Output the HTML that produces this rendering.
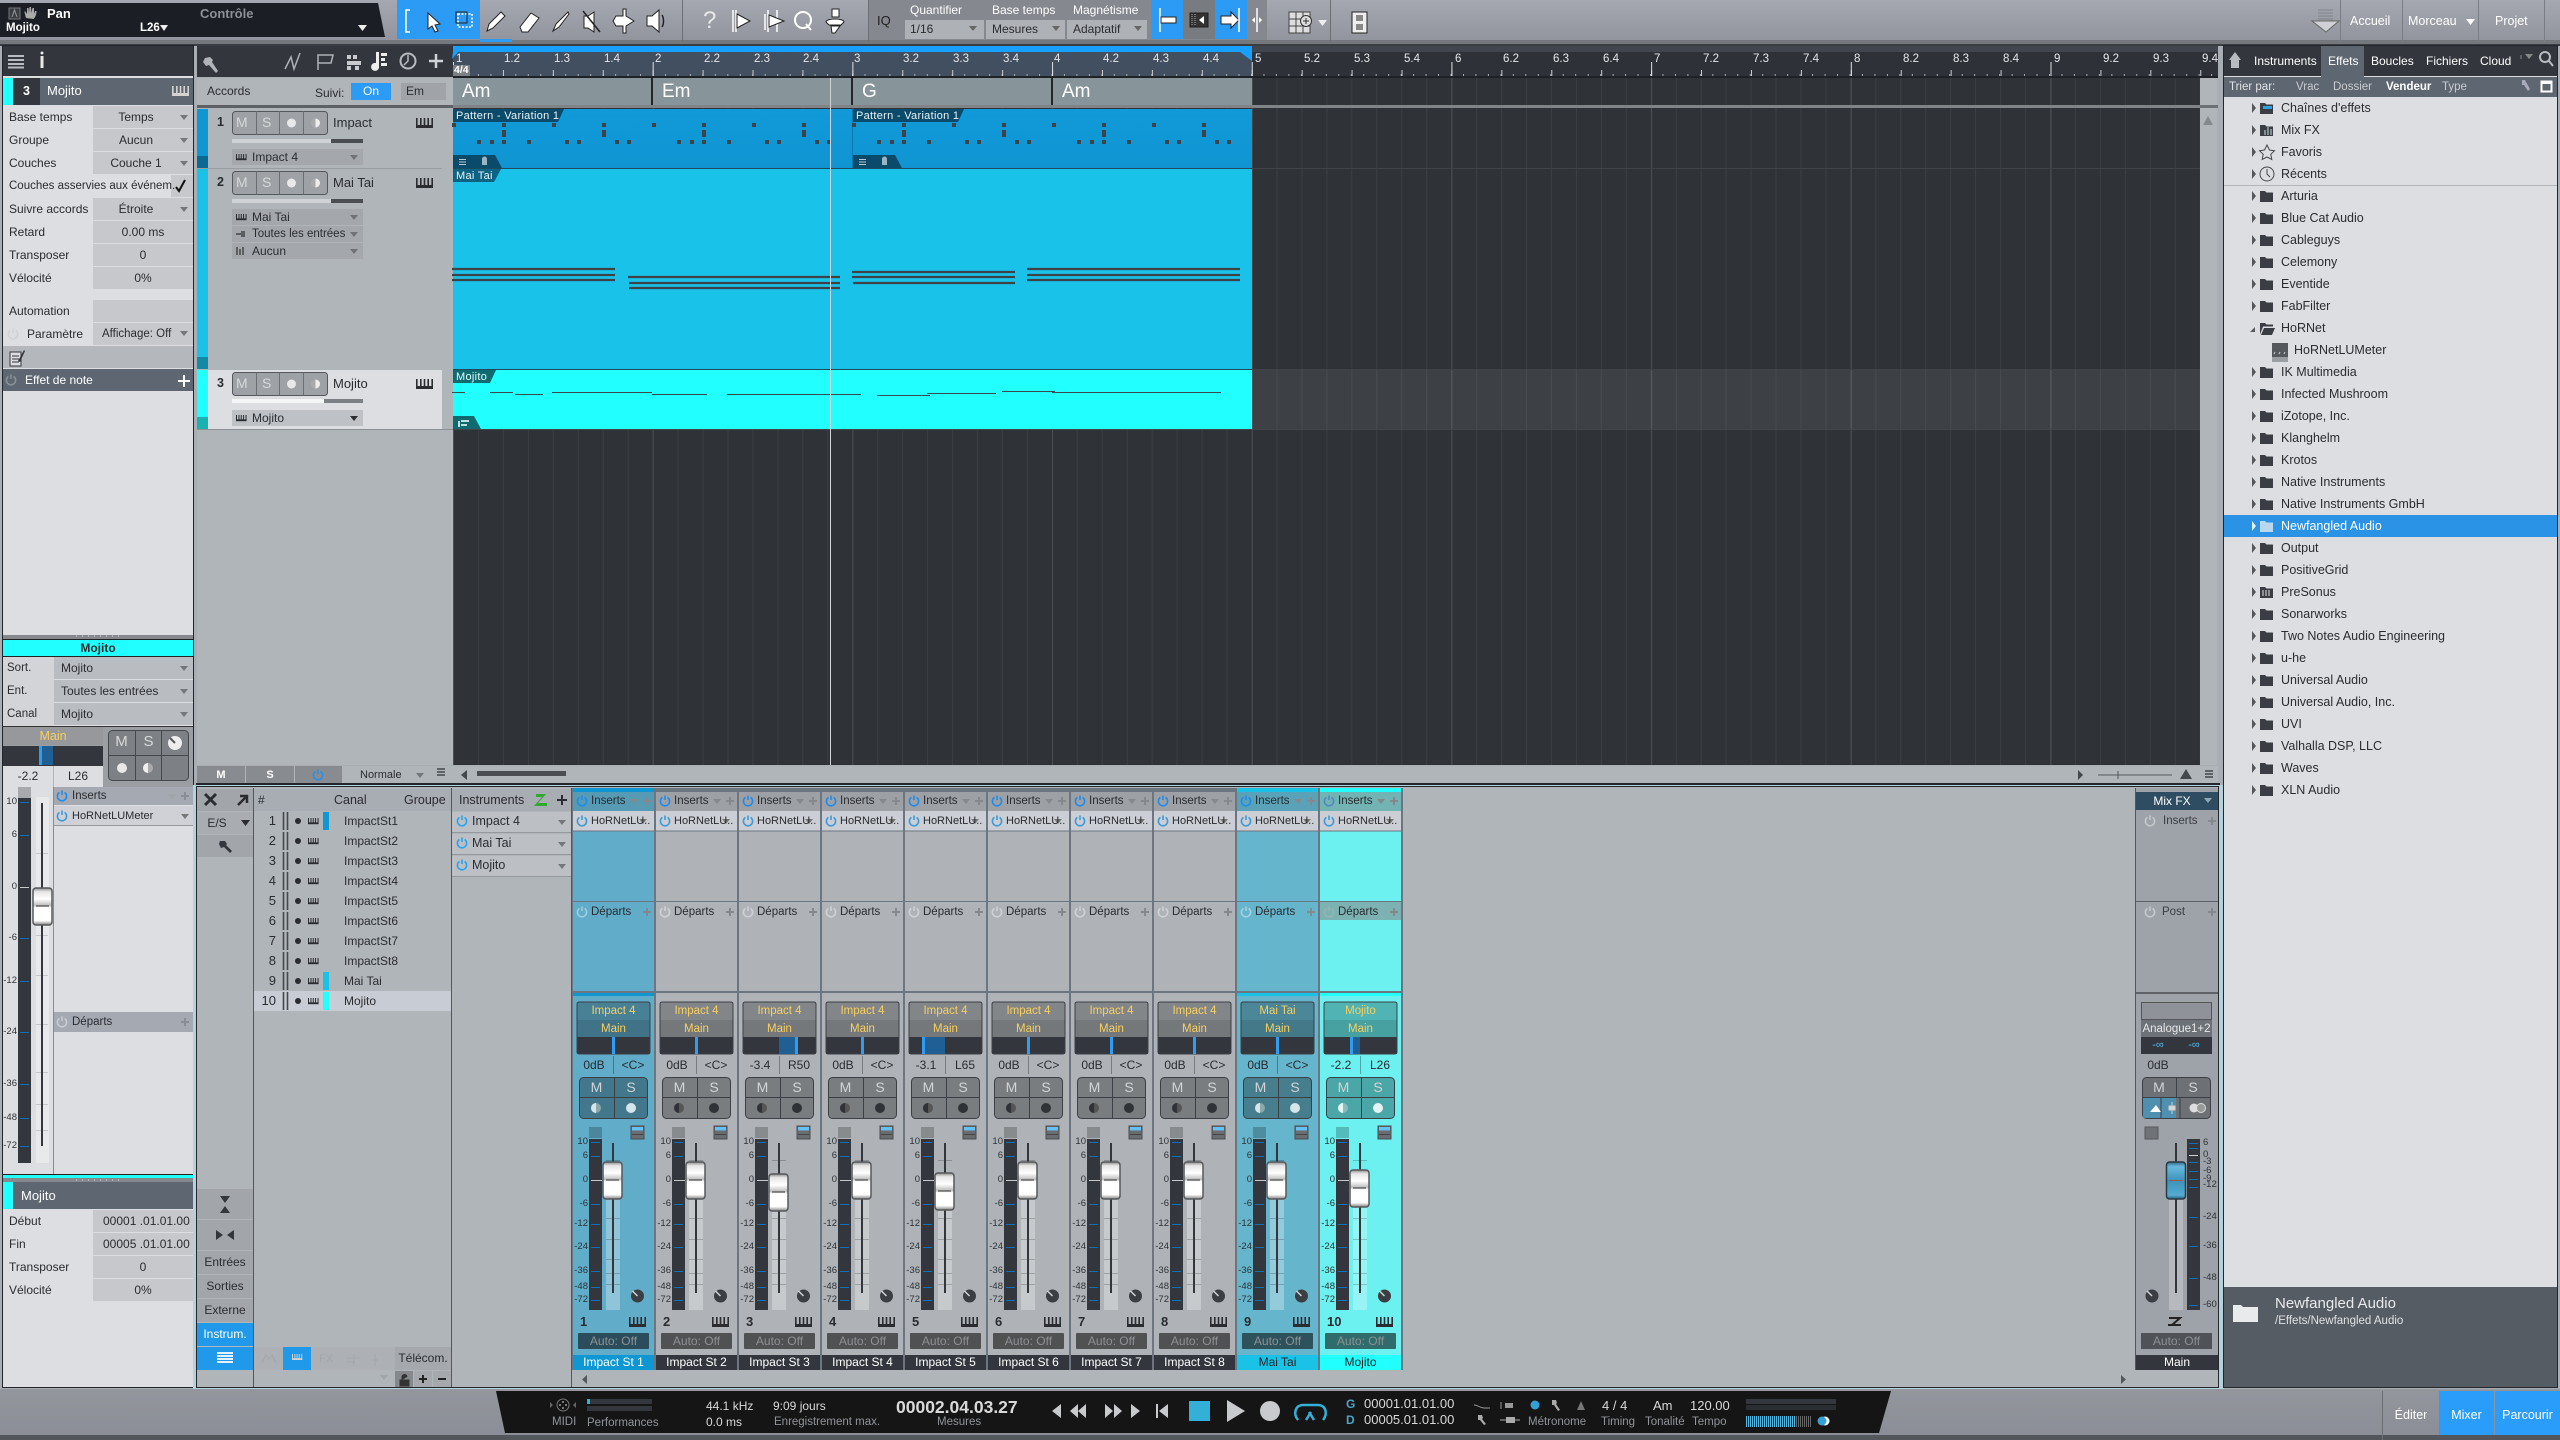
<!DOCTYPE html>
<html><head><meta charset="utf-8"><title>Studio One</title>
<style>
html,body{margin:0;width:2560px;height:1440px;overflow:hidden;background:#a9aeb4}
body{position:relative;font:12.5px "Liberation Sans",sans-serif;color:#2a2c30}
body *{position:absolute;box-sizing:border-box}
i{font-style:normal;white-space:nowrap;line-height:14px;z-index:3}
u{text-decoration:none;white-space:nowrap;line-height:14px;top:52px;font-size:11.5px;color:#e4e6e8;z-index:3}
.f{background:#c6c8cb;left:93px;width:100px;height:22px}
.ce{text-align:center}
.c{left:0;top:0;width:81px;height:1370px}
.bg{left:0;top:792px;width:81px;height:578px;background:#afb3b7}
.in,.pl,.de,.nm,.ma{font-size:11.5px}
.in{left:18px;top:794px}.pl{left:18px;top:814px;font-size:11px}.de{left:18px;top:905px}
.nm,.ma{left:4px;width:73px;text-align:center;color:#f6cf60;top:1004px}.ma{top:1022px}
.vl,.pn{left:2px;width:38px;text-align:center;top:1058px;font-size:12px}.pn{left:41px;width:38px}
.m,.s{left:6px;width:35px;top:1080px;text-align:center;font-size:14px;color:#d2d4d6}.s{left:41px;width:34px}
.n{left:7px;top:1315px;font-weight:bold;font-size:13px}
.au{left:5px;width:71px;top:1334px;text-align:center;color:#8e9194;font-size:12px}
.lb{left:0;top:1355px;width:81px;height:15px;background:#33373d;color:#fff;text-align:center;font-size:12px}
.sc{left:0;width:15px;text-align:right;font-size:9.5px;color:#2f3235}
.a1{top:1135px}.a2{top:1149px}.a3{top:1173px}.a4{top:1197px}.a5{top:1217px}.a6{top:1240px}.a7{top:1264px}.a8{top:1280px}.a9{top:1293px}
.br{left:2281px}
.ln{left:255px;width:21px;text-align:right;font-size:13px}
.t2{color:#90949a;font-size:11.5px}.t1{color:#d8d9da;font-size:12px}
</style></head><body>

<!-- top toolbar -->
<div style="left:0;top:0;width:2560px;height:40px;background:linear-gradient(#a5a8b0,#92959d)"></div>
<div style="left:0;top:40px;width:2560px;height:4px;background:#74787d"></div>
<div style="left:0;top:44px;width:2560px;height:2px;background:#3a3d41"></div>
<div style="left:0;top:3px;width:385px;height:34px;background:#1b1e24;clip-path:polygon(0 0,378px 0,385px 34px,0 34px)"></div>
<div style="left:397px;top:0;width:83px;height:39px;background:#2b9bf5"></div>
<div style="left:480px;top:39px;width:32px;height:3px;background:#2b9bf5"></div>
<i style="left:47px;top:7px;color:#fff;font-weight:bold;font-size:13px">Pan</i>
<i style="left:200px;top:7px;color:#8d9096;font-weight:bold;font-size:13px">Contrôle</i>
<i style="left:6px;top:21px;color:#fff;font-weight:bold;font-size:11.5px">Mojito</i>
<i style="left:140px;top:21px;color:#fff;font-weight:bold;font-size:11.5px">L26</i>
<i style="left:703px;top:9px;color:#e8e8e8;font-size:24px;line-height:24px">?</i>
<i style="left:877px;top:14px;color:#222;font-size:13px">IQ</i>
<div style="left:868px;top:0;width:1px;height:42px;background:#6c7074"></div>
<div style="left:869px;top:0;width:398px;height:40px;background:#85888f"></div>
<i style="left:910px;top:3px;color:#fff;font-size:12px">Quantifier</i>
<i style="left:992px;top:3px;color:#fff;font-size:12px">Base temps</i>
<i style="left:1073px;top:3px;color:#fff;font-size:12px">Magnétisme</i>
<div style="left:905px;top:20px;width:79px;height:19px;background:#aeb1b6"></div>
<div style="left:986px;top:20px;width:79px;height:19px;background:#aeb1b6"></div>
<div style="left:1067px;top:20px;width:80px;height:19px;background:#aeb1b6"></div>
<i style="left:910px;top:22px;font-size:12px">1/16</i><i style="left:992px;top:22px;font-size:12px">Mesures</i><i style="left:1073px;top:22px;font-size:12px">Adaptatif</i>
<div style="left:1151px;top:0;width:32px;height:39px;background:#2b9bf5"></div>
<div style="left:1183px;top:0;width:32px;height:39px;background:#787b80"></div>
<div style="left:1215px;top:0;width:32px;height:39px;background:#2b9bf5"></div>
<div style="left:1330px;top:0;width:1px;height:42px;background:#6c7074"></div>
<div style="left:682px;top:0;width:1px;height:42px;background:#6c7074"></div>
<div style="left:2340px;top:0;width:1px;height:42px;background:#7a7e84"></div>
<div style="left:2402px;top:0;width:1px;height:42px;background:#7a7e84"></div>
<div style="left:2478px;top:0;width:1px;height:42px;background:#7a7e84"></div>
<div style="left:2544px;top:0;width:1px;height:42px;background:#7a7e84"></div>
<i style="left:2350px;top:14px;color:#fff;font-size:12.5px">Accueil</i>
<i style="left:2408px;top:14px;color:#fff;font-size:12.5px">Morceau</i>
<i style="left:2495px;top:14px;color:#fff;font-size:12.5px">Projet</i>

<!-- inspector -->
<div style="left:3px;top:46px;width:190px;height:1341px;background:#dcdee2;outline:1px solid #22262a"></div>
<div style="left:3px;top:46px;width:190px;height:30px;background:#33373d"></div>
<div style="left:3px;top:78px;width:190px;height:27px;background:#5e6771"></div>
<div style="left:3px;top:78px;width:10px;height:27px;background:#22ffff"></div>
<div style="left:13px;top:78px;width:27px;height:27px;background:#33373d"></div>
<i style="left:23px;top:84px;color:#fff;font-weight:bold">3</i>
<i style="left:47px;top:84px;color:#fff;font-size:13px">Mojito</i>
<div class="f" style="top:106px"></div><div class="f" style="top:129px"></div><div class="f" style="top:152px"></div>
<div class="f" style="top:198px"></div><div class="f" style="top:221px"></div><div class="f" style="top:244px"></div><div class="f" style="top:267px"></div>
<div class="f" style="top:300px"></div><div class="f" style="top:323px"></div>
<div style="left:171px;top:175px;width:22px;height:22px;background:#c6c8cb"></div>
<div style="left:3px;top:346px;width:190px;height:22px;background:#b4b7bb"></div>
<div style="left:3px;top:369px;width:190px;height:22px;background:#5e6771"></div>
<i style="left:9px;top:110px;font-size:12px">Base temps</i><i class="ce" style="left:93px;width:86px;top:110px;font-size:12px">Temps</i>
<i style="left:9px;top:133px;font-size:12px">Groupe</i><i class="ce" style="left:93px;width:86px;top:133px;font-size:12px">Aucun</i>
<i style="left:9px;top:156px;font-size:12px">Couches</i><i class="ce" style="left:93px;width:86px;top:156px;font-size:12px">Couche 1</i>
<i style="left:9px;top:179px;font-size:11.5px">Couches asservies aux événem.</i>
<i style="left:9px;top:202px;font-size:12px">Suivre accords</i><i class="ce" style="left:93px;width:86px;top:202px;font-size:12px">Étroite</i>
<i style="left:9px;top:225px;font-size:12px">Retard</i><i class="ce" style="left:93px;width:100px;top:225px;font-size:12px">0.00 ms</i>
<i style="left:9px;top:248px;font-size:12px">Transposer</i><i class="ce" style="left:93px;width:100px;top:248px;font-size:12px">0</i>
<i style="left:9px;top:271px;font-size:12px">Vélocité</i><i class="ce" style="left:93px;width:100px;top:271px;font-size:12px">0%</i>
<i style="left:9px;top:304px;font-size:12px">Automation</i>
<i style="left:27px;top:327px;font-size:12px">Paramètre</i><i style="left:102px;top:327px;font-size:11.5px">Affichage: Off</i>
<i style="left:25px;top:373px;color:#fff;font-size:12px">Effet de note</i>

<div style="left:3px;top:635px;width:190px;height:4px;background:#85888c"></div>
<div style="left:3px;top:639px;width:190px;height:18px;background:#22ffff;border-bottom:1px solid #222;border-top:1px solid #222"></div>
<i class="ce" style="left:3px;width:190px;top:641px;font-weight:bold;font-size:12px">Mojito</i>
<div style="left:3px;top:657px;width:51px;height:69px;background:#d2d4d7"></div>
<div style="left:54px;top:657px;width:139px;height:22px;background:#b9bcc0"></div>
<div style="left:54px;top:680px;width:139px;height:22px;background:#b9bcc0"></div>
<div style="left:54px;top:703px;width:139px;height:22px;background:#b9bcc0"></div>
<i style="left:7px;top:661px;font-size:11.5px">Sort.</i><i style="left:61px;top:661px;font-size:12px">Mojito</i>
<i style="left:7px;top:684px;font-size:11.5px">Ent.</i><i style="left:61px;top:684px;font-size:12px">Toutes les entrées</i>
<i style="left:7px;top:707px;font-size:11.5px">Canal</i><i style="left:61px;top:707px;font-size:12px">Mojito</i>
<div style="left:3px;top:726px;width:190px;height:61px;background:#9b9ea3;border-top:1px solid #333"></div>
<div style="left:3px;top:727px;width:100px;height:18px;background:#96989c"></div>
<i class="ce" style="left:3px;width:100px;top:729px;color:#f6cf60">Main</i>
<div style="left:3px;top:746px;width:100px;height:20px;background:#33373d"></div>
<div style="left:3px;top:766px;width:100px;height:21px;background:#dcdee2"></div>
<i class="ce" style="left:3px;width:50px;top:769px;font-size:12px">-2.2</i><i class="ce" style="left:53px;width:50px;top:769px;font-size:12px">L26</i>
<i class="ce" style="left:108px;width:27px;top:735px;color:#d8d8d8;font-size:15px">M</i>
<i class="ce" style="left:135px;width:27px;top:735px;color:#d8d8d8;font-size:15px">S</i>
<div style="left:54px;top:787px;width:139px;height:18px;background:#a4a9b2"></div>
<div style="left:54px;top:806px;width:139px;height:20px;background:#cfd1d6;border-bottom:1px solid #999"></div>
<div style="left:54px;top:1012px;width:139px;height:20px;background:#a4a9b2"></div>
<i style="left:72px;top:789px;font-size:11.5px">Inserts</i><i style="left:72px;top:809px;font-size:11px">HoRNetLUMeter</i><i style="left:72px;top:1015px;font-size:11.5px">Départs</i>
<div style="left:36px;top:797px;width:13px;height:366px;background:#e8e9eb"></div>
<div style="left:53px;top:787px;width:1px;height:387px;background:#888b8f"></div>
<div style="left:18px;top:787px;width:13px;height:11px;background:#a7a9ac"></div>
<div style="left:18px;top:798px;width:13px;height:365px;background:#33373d"></div>
<i class="sc" style="left:2px;top:795px">10</i><i class="sc" style="left:2px;top:828px">6</i><i class="sc" style="left:2px;top:880px">0</i><i class="sc" style="left:2px;top:931px">-6</i><i class="sc" style="left:2px;top:974px">-12</i><i class="sc" style="left:2px;top:1025px">-24</i><i class="sc" style="left:2px;top:1077px">-36</i><i class="sc" style="left:2px;top:1111px">-48</i><i class="sc" style="left:2px;top:1139px">-72</i>
<div style="left:3px;top:1174px;width:190px;height:4px;background:#22ffff;border-top:1px solid #222"></div>
<div style="left:3px;top:1178px;width:190px;height:4px;background:#85888c"></div>
<div style="left:3px;top:1182px;width:190px;height:27px;background:#5e6771"></div>
<div style="left:3px;top:1182px;width:10px;height:27px;background:#22ffff"></div>
<i style="left:21px;top:1189px;color:#fff;font-size:13px">Mojito</i>
<div style="left:93px;top:1210px;width:100px;height:22px;background:#c6c8cb"></div>
<div style="left:93px;top:1233px;width:100px;height:22px;background:#c6c8cb"></div>
<div style="left:93px;top:1256px;width:100px;height:22px;background:#c6c8cb"></div>
<div style="left:93px;top:1279px;width:100px;height:22px;background:#c6c8cb"></div>
<i style="left:9px;top:1214px;font-size:12px">Début</i><i style="left:103px;top:1214px;font-size:12px">00001 .01.01.00</i>
<i style="left:9px;top:1237px;font-size:12px">Fin</i><i style="left:103px;top:1237px;font-size:12px">00005 .01.01.00</i>
<i style="left:9px;top:1260px;font-size:12px">Transposer</i><i class="ce" style="left:93px;width:100px;top:1260px;font-size:12px">0</i>
<i style="left:9px;top:1283px;font-size:12px">Vélocité</i><i class="ce" style="left:93px;width:100px;top:1283px;font-size:12px">0%</i>

<!-- arrange header -->
<div style="left:197px;top:46px;width:256px;height:31px;background:#33373d"></div>
<div style="left:197px;top:78px;width:256px;height:687px;background:#b0b5ba"></div>
<i style="left:207px;top:84px;font-size:12px">Accords</i><i style="left:315px;top:86px;font-size:12px">Suivi:</i>
<div style="left:351px;top:83px;width:40px;height:17px;background:#2b9bf5"></div>
<i class="ce" style="left:351px;width:40px;top:84px;color:#fff;font-size:12px">On</i>
<div style="left:401px;top:83px;width:45px;height:17px;background:#a0a4a9"></div>
<i style="left:406px;top:84px;font-size:12px">Em</i>
<div style="left:197px;top:105px;width:256px;height:3px;background:#5d6064"></div>

<div style="left:197px;top:109px;width:11px;height:47px;background:#0f97d4"></div>
<div style="left:197px;top:156px;width:11px;height:12px;background:#0a6a94"></div>
<div style="left:197px;top:169px;width:11px;height:188px;background:#1ac2e8"></div>
<div style="left:197px;top:357px;width:11px;height:12px;background:#128aa5"></div>
<div style="left:197px;top:370px;width:11px;height:47px;background:#22ffff"></div>
<div style="left:197px;top:417px;width:11px;height:12px;background:#17b3b3"></div>
<div style="left:208px;top:370px;width:234px;height:59px;background:#dcdee2"></div>
<div style="left:197px;top:168px;width:245px;height:1px;background:#9a9da1"></div>
<div style="left:197px;top:429px;width:256px;height:1px;background:#8d9094"></div>
<i style="left:217px;top:115px;font-weight:bold">1</i><i style="left:217px;top:175px;font-weight:bold">2</i><i style="left:217px;top:376px;font-weight:bold">3</i>
<i style="left:333px;top:116px;font-size:13px">Impact</i><i style="left:333px;top:176px;font-size:13px">Mai Tai</i><i style="left:333px;top:377px;font-size:13px">Mojito</i>
<div style="left:232px;top:139px;width:99px;height:4px;background:#d0d3d6"></div><div style="left:331px;top:139px;width:32px;height:4px;background:#4a4e52"></div>
<div style="left:232px;top:199px;width:99px;height:4px;background:#d0d3d6"></div><div style="left:331px;top:199px;width:32px;height:4px;background:#4a4e52"></div>
<div style="left:232px;top:399px;width:92px;height:4px;background:#f4f5f6"></div><div style="left:324px;top:399px;width:39px;height:4px;background:#7d8186"></div>
<div style="left:232px;top:149px;width:131px;height:16px;background:#a4a8ad"></div>
<div style="left:232px;top:209px;width:131px;height:16px;background:#a4a8ad"></div>
<div style="left:232px;top:226px;width:131px;height:16px;background:#a4a8ad"></div>
<div style="left:232px;top:243px;width:131px;height:16px;background:#a4a8ad"></div>
<div style="left:232px;top:410px;width:131px;height:16px;background:#bec1c5"></div>
<i style="left:252px;top:150px;font-size:12px">Impact 4</i><i style="left:252px;top:210px;font-size:12px">Mai Tai</i><i style="left:252px;top:227px;font-size:11.5px">Toutes les entrées</i><i style="left:252px;top:244px;font-size:12px">Aucun</i><i style="left:252px;top:411px;font-size:12px">Mojito</i>
<i style="left:236px;top:115px;color:#d8d8d8;font-size:14px">M</i><i style="left:262px;top:115px;color:#d8d8d8;font-size:14px">S</i>
<i style="left:236px;top:175px;color:#d8d8d8;font-size:14px">M</i><i style="left:262px;top:175px;color:#d8d8d8;font-size:14px">S</i>
<i style="left:236px;top:376px;color:#d8d8d8;font-size:14px">M</i><i style="left:262px;top:376px;color:#d8d8d8;font-size:14px">S</i>

<!-- ruler -->
<div style="left:453px;top:46px;width:1765px;height:31px;background:#2e3138"></div>
<div style="left:1252px;top:46px;width:966px;height:6px;background:#41464e"></div>
<div style="left:453px;top:46px;width:799px;height:31px;background:#424f60"></div>
<div style="left:453px;top:46px;width:799px;height:6px;background:#17a0ff"></div>
<div style="left:453px;top:60px;width:1765px;height:17px;background-image:linear-gradient(90deg,#e0e0e0 1px,transparent 1px),linear-gradient(90deg,#ccc 1px,transparent 1px),linear-gradient(90deg,#aaa 1px,transparent 1px);background-size:199.7px 15px,49.925px 7px,12.48px 3px;background-repeat:repeat-x;background-position:0 100%,0 100%,0 100%"></div>
<div style="left:453px;top:76px;width:1765px;height:2px;background:#1e2125"></div>
<u style="left:456px">1</u><u style="left:504px">1.2</u><u style="left:554px">1.3</u><u style="left:604px">1.4</u><u style="left:655px">2</u><u style="left:704px">2.2</u><u style="left:754px">2.3</u><u style="left:803px">2.4</u><u style="left:854px">3</u><u style="left:903px">3.2</u><u style="left:953px">3.3</u><u style="left:1003px">3.4</u><u style="left:1054px">4</u><u style="left:1103px">4.2</u><u style="left:1153px">4.3</u><u style="left:1203px">4.4</u><u style="left:1255px">5</u><u style="left:1304px">5.2</u><u style="left:1354px">5.3</u><u style="left:1404px">5.4</u><u style="left:1455px">6</u><u style="left:1503px">6.2</u><u style="left:1553px">6.3</u><u style="left:1603px">6.4</u><u style="left:1654px">7</u><u style="left:1703px">7.2</u><u style="left:1753px">7.3</u><u style="left:1803px">7.4</u><u style="left:1854px">8</u><u style="left:1903px">8.2</u><u style="left:1953px">8.3</u><u style="left:2003px">8.4</u><u style="left:2054px">9</u><u style="left:2103px">9.2</u><u style="left:2153px">9.3</u><u style="left:2202px">9.4</u>
<div style="left:453px;top:65px;width:17px;height:11px;background:#7c7f84"></div>
<i style="left:454px;top:63px;color:#fff;font-size:10.5px;font-weight:bold">4/4</i>

<!-- arrange -->
<div style="left:453px;top:78px;width:1747px;height:687px;background-color:#2f3337;background-image:linear-gradient(90deg,#4b4e52 1px,transparent 1px),linear-gradient(90deg,#3b3f43 1px,transparent 1px);background-size:199.7px 100%,24.96px 100%"></div>
<div style="left:1252px;top:370px;width:948px;height:59px;background:rgba(255,255,255,.07)"></div>
<div style="left:1252px;top:168px;width:948px;height:1px;background:#3f4347"></div>
<div style="left:1252px;top:369px;width:948px;height:1px;background:#3f4347"></div>
<div style="left:453px;top:429px;width:1747px;height:1px;background:#42464a"></div>
<div style="left:453px;top:105px;width:1765px;height:3px;background:#808487"></div>
<div style="left:453px;top:78px;width:799px;height:27px;background:#87959b"></div>
<div style="left:651px;top:78px;width:2px;height:27px;background:#22262a"></div>
<div style="left:851px;top:78px;width:2px;height:27px;background:#22262a"></div>
<div style="left:1051px;top:78px;width:2px;height:27px;background:#22262a"></div>
<i style="left:462px;top:82px;color:#fff;font-size:19px;line-height:20px">Am</i>
<i style="left:662px;top:82px;color:#fff;font-size:19px;line-height:20px">Em</i>
<i style="left:862px;top:82px;color:#fff;font-size:19px;line-height:20px">G</i>
<i style="left:1062px;top:82px;color:#fff;font-size:19px;line-height:20px">Am</i>
<div style="left:453px;top:109px;width:799px;height:59px;background:linear-gradient(#1199d8,#1095d2)"></div>
<div style="left:453px;top:169px;width:799px;height:200px;background:#19c2e8"></div>
<div style="left:453px;top:370px;width:799px;height:59px;background:#22ffff"></div>
<i style="left:456px;top:109px;color:#eaf2f6;font-size:11px;letter-spacing:.3px">Pattern - Variation 1</i>
<i style="left:856px;top:109px;color:#eaf2f6;font-size:11px;letter-spacing:.3px">Pattern - Variation 1</i>
<i style="left:456px;top:169px;color:#eaf2f6;font-size:11px;letter-spacing:.3px">Mai Tai</i>
<i style="left:456px;top:370px;color:#dff;font-size:11px;letter-spacing:.3px">Mojito</i>
<div style="left:2200px;top:78px;width:17px;height:687px;background:#b0b5ba"></div>
<div style="left:2200px;top:105px;width:18px;height:3px;background:#6d7074"></div>

<div style="left:197px;top:766px;width:2021px;height:17px;background:#b0b5ba"></div>
<div style="left:197px;top:766px;width:48px;height:17px;background:#888b90"></div>
<div style="left:246px;top:766px;width:48px;height:17px;background:#888b90"></div>
<div style="left:295px;top:766px;width:47px;height:17px;background:#888b90"></div>
<i class="ce" style="left:197px;width:48px;top:768px;color:#fff;font-size:11px;font-weight:bold">M</i>
<i class="ce" style="left:246px;width:48px;top:768px;color:#fff;font-size:11px;font-weight:bold">S</i>
<i style="left:360px;top:768px;font-size:11px">Normale</i>
<div style="left:477px;top:771px;width:89px;height:5px;background:#4a4e52"></div>
<div style="left:196px;top:783px;width:2024px;height:3px;background:#23272b"></div>

<!-- mixer -->
<div style="left:193px;top:785px;width:2031px;height:604px;background:#b4d2de"></div>
<div style="left:197px;top:787px;width:2021px;height:600px;background:#b0b5ba;outline:1px solid #23272b"></div>
<div style="left:197px;top:789px;width:56px;height:22px;background:#a2a6ab"></div>
<div style="left:197px;top:812px;width:56px;height:22px;background:#a9adb2"></div>
<div style="left:197px;top:835px;width:56px;height:22px;background:#a2a6ab"></div>
<div style="left:197px;top:1189px;width:56px;height:30px;background:#a2a6ab"></div>
<div style="left:197px;top:1220px;width:56px;height:30px;background:#a2a6ab"></div>
<div style="left:197px;top:1251px;width:56px;height:23px;background:#a2a6ab"></div>
<div style="left:197px;top:1275px;width:56px;height:23px;background:#a2a6ab"></div>
<div style="left:197px;top:1299px;width:56px;height:23px;background:#a2a6ab"></div>
<div style="left:197px;top:1323px;width:56px;height:23px;background:#2199ea"></div>
<div style="left:197px;top:1347px;width:56px;height:23px;background:#2199ea"></div>
<i class="ce" style="left:197px;width:40px;top:816px;font-size:12px">E/S</i>
<i class="ce" style="left:197px;width:56px;top:1255px;font-size:12px">Entrées</i>
<i class="ce" style="left:197px;width:56px;top:1279px;font-size:12px">Sorties</i>
<i class="ce" style="left:197px;width:56px;top:1303px;font-size:12px">Externe</i>
<i class="ce" style="left:197px;width:56px;top:1327px;color:#fff;font-size:12px">Instrum.</i>
<div style="left:253px;top:788px;width:1px;height:599px;background:#54585c"></div>
<div style="left:451px;top:788px;width:1px;height:599px;background:#54585c"></div>
<div style="left:571px;top:788px;width:1px;height:599px;background:#54585c"></div>
<div style="left:254px;top:789px;width:197px;height:22px;background:#a8acb3"></div>
<div style="left:452px;top:789px;width:119px;height:22px;background:#a8acb3"></div>
<i style="left:258px;top:793px;font-size:12px">#</i><i style="left:334px;top:793px;font-size:12.5px">Canal</i><i style="left:404px;top:793px;font-size:12.5px">Groupe</i>
<i style="left:459px;top:793px;font-size:12.5px">Instruments</i>
<div style="left:254px;top:991px;width:197px;height:20px;background:#c8ccd4"></div>
<i class="ln" style="top:814px">1</i><i class="ln" style="top:834px">2</i><i class="ln" style="top:854px">3</i><i class="ln" style="top:874px">4</i><i class="ln" style="top:894px">5</i><i class="ln" style="top:914px">6</i><i class="ln" style="top:934px">7</i><i class="ln" style="top:954px">8</i><i class="ln" style="top:974px">9</i><i class="ln" style="top:994px">10</i>
<i style="left:344px;top:814px;font-size:12px">ImpactSt1</i><i style="left:344px;top:834px;font-size:12px">ImpactSt2</i><i style="left:344px;top:854px;font-size:12px">ImpactSt3</i><i style="left:344px;top:874px;font-size:12px">ImpactSt4</i><i style="left:344px;top:894px;font-size:12px">ImpactSt5</i><i style="left:344px;top:914px;font-size:12px">ImpactSt6</i><i style="left:344px;top:934px;font-size:12px">ImpactSt7</i><i style="left:344px;top:954px;font-size:12px">ImpactSt8</i><i style="left:344px;top:974px;font-size:12px">Mai Tai</i><i style="left:344px;top:994px;font-size:12px">Mojito</i>
<div style="left:452px;top:812px;width:119px;height:21px;background:#bcc0c5;border-bottom:1px solid #95999e"></div>
<div style="left:452px;top:834px;width:119px;height:21px;background:#bcc0c5;border-bottom:1px solid #95999e"></div>
<div style="left:452px;top:856px;width:119px;height:21px;background:#bcc0c5;border-bottom:1px solid #95999e"></div>
<i style="left:472px;top:814px">Impact 4</i><i style="left:472px;top:836px">Mai Tai</i><i style="left:472px;top:858px">Mojito</i>
<div style="left:254px;top:1347px;width:197px;height:23px;background:#adb1b6"></div>
<div style="left:283px;top:1347px;width:28px;height:23px;background:#2199ea"></div>
<div style="left:395px;top:1347px;width:56px;height:23px;background:#a5a9ae"></div>
<i style="left:319px;top:1352px;color:#a2a6aa;font-size:11px">FX</i>
<i class="ce" style="left:395px;width:56px;top:1351px;font-size:12px">Télécom.</i>
<div style="left:395px;top:1371px;width:18px;height:16px;background:#85888d"></div>
<div style="left:414px;top:1371px;width:18px;height:16px;background:#a5a9ae"></div>
<div style="left:433px;top:1371px;width:18px;height:16px;background:#a5a9ae"></div>

<div style="left:572px;top:788px;width:831px;height:582px;background:#6c7680"></div>

<div class="c" style="left:573px"><div class="bg" style="background:#60acc9"></div><i class="in">Inserts</i><i class="pl">HoRNetLU..</i><i class="de">Départs</i><i class="nm">Impact 4</i><i class="ma">Main</i><i class="vl">0dB</i><i class="pn">&lt;C&gt;</i><i class="m">M</i><i class="s">S</i><i class="sc a1">10</i><i class="sc a2">6</i><i class="sc a3">0</i><i class="sc a4">-6</i><i class="sc a5">-12</i><i class="sc a6">-24</i><i class="sc a7">-36</i><i class="sc a8">-48</i><i class="sc a9">-72</i><i class="n">1</i><i class="au">Auto: Off</i><i class="lb" style="background:#0f97d4">Impact St 1</i></div>
<div class="c" style="left:656px"><div class="bg"></div><i class="in">Inserts</i><i class="pl">HoRNetLU..</i><i class="de">Départs</i><i class="nm">Impact 4</i><i class="ma">Main</i><i class="vl">0dB</i><i class="pn">&lt;C&gt;</i><i class="m">M</i><i class="s">S</i><i class="sc a1">10</i><i class="sc a2">6</i><i class="sc a3">0</i><i class="sc a4">-6</i><i class="sc a5">-12</i><i class="sc a6">-24</i><i class="sc a7">-36</i><i class="sc a8">-48</i><i class="sc a9">-72</i><i class="n">2</i><i class="au">Auto: Off</i><i class="lb">Impact St 2</i></div>
<div class="c" style="left:739px"><div class="bg"></div><i class="in">Inserts</i><i class="pl">HoRNetLU..</i><i class="de">Départs</i><i class="nm">Impact 4</i><i class="ma">Main</i><i class="vl">-3.4</i><i class="pn">R50</i><i class="m">M</i><i class="s">S</i><i class="sc a1">10</i><i class="sc a2">6</i><i class="sc a3">0</i><i class="sc a4">-6</i><i class="sc a5">-12</i><i class="sc a6">-24</i><i class="sc a7">-36</i><i class="sc a8">-48</i><i class="sc a9">-72</i><i class="n">3</i><i class="au">Auto: Off</i><i class="lb">Impact St 3</i></div>
<div class="c" style="left:822px"><div class="bg"></div><i class="in">Inserts</i><i class="pl">HoRNetLU..</i><i class="de">Départs</i><i class="nm">Impact 4</i><i class="ma">Main</i><i class="vl">0dB</i><i class="pn">&lt;C&gt;</i><i class="m">M</i><i class="s">S</i><i class="sc a1">10</i><i class="sc a2">6</i><i class="sc a3">0</i><i class="sc a4">-6</i><i class="sc a5">-12</i><i class="sc a6">-24</i><i class="sc a7">-36</i><i class="sc a8">-48</i><i class="sc a9">-72</i><i class="n">4</i><i class="au">Auto: Off</i><i class="lb">Impact St 4</i></div>
<div class="c" style="left:905px"><div class="bg"></div><i class="in">Inserts</i><i class="pl">HoRNetLU..</i><i class="de">Départs</i><i class="nm">Impact 4</i><i class="ma">Main</i><i class="vl">-3.1</i><i class="pn">L65</i><i class="m">M</i><i class="s">S</i><i class="sc a1">10</i><i class="sc a2">6</i><i class="sc a3">0</i><i class="sc a4">-6</i><i class="sc a5">-12</i><i class="sc a6">-24</i><i class="sc a7">-36</i><i class="sc a8">-48</i><i class="sc a9">-72</i><i class="n">5</i><i class="au">Auto: Off</i><i class="lb">Impact St 5</i></div>
<div class="c" style="left:988px"><div class="bg"></div><i class="in">Inserts</i><i class="pl">HoRNetLU..</i><i class="de">Départs</i><i class="nm">Impact 4</i><i class="ma">Main</i><i class="vl">0dB</i><i class="pn">&lt;C&gt;</i><i class="m">M</i><i class="s">S</i><i class="sc a1">10</i><i class="sc a2">6</i><i class="sc a3">0</i><i class="sc a4">-6</i><i class="sc a5">-12</i><i class="sc a6">-24</i><i class="sc a7">-36</i><i class="sc a8">-48</i><i class="sc a9">-72</i><i class="n">6</i><i class="au">Auto: Off</i><i class="lb">Impact St 6</i></div>
<div class="c" style="left:1071px"><div class="bg"></div><i class="in">Inserts</i><i class="pl">HoRNetLU..</i><i class="de">Départs</i><i class="nm">Impact 4</i><i class="ma">Main</i><i class="vl">0dB</i><i class="pn">&lt;C&gt;</i><i class="m">M</i><i class="s">S</i><i class="sc a1">10</i><i class="sc a2">6</i><i class="sc a3">0</i><i class="sc a4">-6</i><i class="sc a5">-12</i><i class="sc a6">-24</i><i class="sc a7">-36</i><i class="sc a8">-48</i><i class="sc a9">-72</i><i class="n">7</i><i class="au">Auto: Off</i><i class="lb">Impact St 7</i></div>
<div class="c" style="left:1154px"><div class="bg"></div><i class="in">Inserts</i><i class="pl">HoRNetLU..</i><i class="de">Départs</i><i class="nm">Impact 4</i><i class="ma">Main</i><i class="vl">0dB</i><i class="pn">&lt;C&gt;</i><i class="m">M</i><i class="s">S</i><i class="sc a1">10</i><i class="sc a2">6</i><i class="sc a3">0</i><i class="sc a4">-6</i><i class="sc a5">-12</i><i class="sc a6">-24</i><i class="sc a7">-36</i><i class="sc a8">-48</i><i class="sc a9">-72</i><i class="n">8</i><i class="au">Auto: Off</i><i class="lb">Impact St 8</i></div>
<div class="c" style="left:1237px"><div class="bg" style="background:#65b5cc"></div><i class="in">Inserts</i><i class="pl">HoRNetLU..</i><i class="de">Départs</i><i class="nm">Mai Tai</i><i class="ma">Main</i><i class="vl">0dB</i><i class="pn">&lt;C&gt;</i><i class="m">M</i><i class="s">S</i><i class="sc a1">10</i><i class="sc a2">6</i><i class="sc a3">0</i><i class="sc a4">-6</i><i class="sc a5">-12</i><i class="sc a6">-24</i><i class="sc a7">-36</i><i class="sc a8">-48</i><i class="sc a9">-72</i><i class="n">9</i><i class="au">Auto: Off</i><i class="lb" style="background:#1ac2e8;color:#222">Mai Tai</i></div>
<div class="c" style="left:1320px"><div class="bg" style="background:#6cf0f0"></div><i class="in">Inserts</i><i class="pl">HoRNetLU..</i><i class="de">Départs</i><i class="nm">Mojito</i><i class="ma">Main</i><i class="vl">-2.2</i><i class="pn">L26</i><i class="m">M</i><i class="s">S</i><i class="sc a1">10</i><i class="sc a2">6</i><i class="sc a3">0</i><i class="sc a4">-6</i><i class="sc a5">-12</i><i class="sc a6">-24</i><i class="sc a7">-36</i><i class="sc a8">-48</i><i class="sc a9">-72</i><i class="n">10</i><i class="au">Auto: Off</i><i class="lb" style="background:#22ffff;color:#222">Mojito</i></div>

<!-- main channel -->
<div style="left:2135px;top:788px;width:83px;height:582px;background:#9ea3a9;border-left:1px solid #54585c"></div>
<div style="left:2136px;top:792px;width:82px;height:18px;background:#2e4d62"></div>
<i class="ce" style="left:2136px;width:72px;top:794px;color:#fff;font-size:12px">Mix FX</i>
<i style="left:2163px;top:814px;font-size:11.5px;color:#3a3d41">Inserts</i><i style="left:2162px;top:905px;font-size:11.5px;color:#3a3d41">Post</i>
<div style="left:2136px;top:901px;width:82px;height:1px;background:#5f6367"></div>
<div style="left:2136px;top:992px;width:82px;height:2px;background:#5f6367"></div>
<div style="left:2141px;top:1020px;width:71px;height:17px;background:#6c7278"></div>
<div style="left:2141px;top:1002px;width:71px;height:18px;background:#8f9399;border:1px solid #555"></div>
<i class="ce" style="left:2141px;width:71px;top:1022px;color:#e8e8e8;font-size:11.5px">Analogue1+2</i>
<div style="left:2141px;top:1037px;width:71px;height:17px;background:#33373d"></div>
<i class="ce" style="left:2141px;width:34px;top:1038px;color:#55b8f0;font-size:11px">-∞</i><i class="ce" style="left:2177px;width:34px;top:1038px;color:#55b8f0;font-size:11px">-∞</i>
<i class="ce" style="left:2141px;width:34px;top:1058px;font-size:12px">0dB</i>
<i class="ce" style="left:2142px;width:34px;top:1080px;color:#d2d4d6;font-size:14px">M</i><i class="ce" style="left:2176px;width:34px;top:1080px;color:#d2d4d6;font-size:14px">S</i>
<i class="sc" style="left:2203px;text-align:left;top:1136px">6</i><i class="sc" style="left:2203px;text-align:left;top:1148px">0</i><i class="sc" style="left:2203px;text-align:left;top:1155px">-3</i><i class="sc" style="left:2203px;text-align:left;top:1164px">-6</i><i class="sc" style="left:2203px;text-align:left;top:1172px">-9</i><i class="sc" style="left:2203px;text-align:left;top:1178px">-12</i><i class="sc" style="left:2203px;text-align:left;top:1210px">-24</i><i class="sc" style="left:2203px;text-align:left;top:1239px">-36</i><i class="sc" style="left:2203px;text-align:left;top:1271px">-48</i><i class="sc" style="left:2203px;text-align:left;top:1298px">-60</i>
<i class="ce" style="left:2141px;width:71px;top:1334px;color:#8e9194;font-size:12px">Auto: Off</i>
<i class="lb" style="left:2136px;width:82px">Main</i>

<!-- browser -->
<div style="left:2224px;top:46px;width:333px;height:1341px;background:#dcdee2;outline:1px solid #23272b"></div>
<div style="left:2224px;top:46px;width:333px;height:30px;background:#33373d"></div>
<div style="left:2321px;top:46px;width:43px;height:31px;background:#5e6771"></div>
<div style="left:2224px;top:77px;width:333px;height:20px;background:#5e6771"></div>
<i style="left:2254px;top:54px;color:#fff;font-size:12px">Instruments</i><i style="left:2328px;top:54px;color:#fff;font-size:12px">Effets</i><i style="left:2371px;top:54px;color:#fff;font-size:12px">Boucles</i><i style="left:2426px;top:54px;color:#fff;font-size:12px">Fichiers</i><i style="left:2480px;top:54px;color:#fff;font-size:12px">Cloud</i>
<i style="left:2229px;top:80px;color:#e0e2e4;font-size:11.5px">Trier par:</i><i style="left:2296px;top:80px;color:#c8cbce;font-size:11.5px">Vrac</i><i style="left:2333px;top:80px;color:#c8cbce;font-size:11.5px">Dossier</i><i style="left:2386px;top:80px;color:#fff;font-size:11.5px;font-weight:bold">Vendeur</i><i style="left:2442px;top:80px;color:#c8cbce;font-size:11.5px">Type</i>
<div style="left:2224px;top:185px;width:333px;height:1px;background:#b2b5b9"></div>
<div style="left:2224px;top:515px;width:333px;height:22px;background:#2a93e6"></div>
<i class="br" style="top:101px">Chaînes d'effets</i><i class="br" style="top:123px">Mix FX</i><i class="br" style="top:145px">Favoris</i><i class="br" style="top:167px">Récents</i><i class="br" style="top:189px">Arturia</i><i class="br" style="top:211px">Blue Cat Audio</i><i class="br" style="top:233px">Cableguys</i><i class="br" style="top:255px">Celemony</i><i class="br" style="top:277px">Eventide</i><i class="br" style="top:299px">FabFilter</i><i class="br" style="top:321px">HoRNet</i><i style="left:2294px;top:343px">HoRNetLUMeter</i><i class="br" style="top:365px">IK Multimedia</i><i class="br" style="top:387px">Infected Mushroom</i><i class="br" style="top:409px">iZotope, Inc.</i><i class="br" style="top:431px">Klanghelm</i><i class="br" style="top:453px">Krotos</i><i class="br" style="top:475px">Native Instruments</i><i class="br" style="top:497px">Native Instruments GmbH</i><i class="br" style="top:519px;color:#fff">Newfangled Audio</i><i class="br" style="top:541px">Output</i><i class="br" style="top:563px">PositiveGrid</i><i class="br" style="top:585px">PreSonus</i><i class="br" style="top:607px">Sonarworks</i><i class="br" style="top:629px">Two Notes Audio Engineering</i><i class="br" style="top:651px">u-he</i><i class="br" style="top:673px">Universal Audio</i><i class="br" style="top:695px">Universal Audio, Inc.</i><i class="br" style="top:717px">UVI</i><i class="br" style="top:739px">Valhalla DSP, LLC</i><i class="br" style="top:761px">Waves</i><i class="br" style="top:783px">XLN Audio</i>
<div style="left:2224px;top:1287px;width:333px;height:100px;background:#565c64"></div>
<i style="left:2275px;top:1296px;color:#e8eaec;font-size:15px;line-height:16px">Newfangled Audio</i>
<i style="left:2275px;top:1314px;color:#e0e2e4;font-size:11.5px">/Effets/Newfangled Audio</i>

<!-- bottom bar -->
<div style="left:0;top:1389px;width:2560px;height:46px;background:linear-gradient(#93969d,#8b8e96)"></div>
<div style="left:0;top:1435px;width:2560px;height:5px;background:#53565b"></div>
<div style="left:496px;top:1391px;width:1395px;height:42px;background:#151515;clip-path:polygon(0 0,1395px 0,1383px 42px,9px 42px)"></div>
<div style="left:2382px;top:1391px;width:1px;height:49px;background:#6b6e73"></div>
<div style="left:2439px;top:1391px;width:55px;height:44px;background:#2a9dfb"></div>
<div style="left:2495px;top:1391px;width:65px;height:44px;background:#2a9dfb"></div>
<i class="ce" style="left:2383px;width:56px;top:1408px;color:#fff;font-size:12.5px">Éditer</i>
<i class="ce" style="left:2439px;width:55px;top:1408px;color:#fff;font-size:12.5px">Mixer</i>
<i class="ce" style="left:2495px;width:65px;top:1408px;color:#fff;font-size:12.5px">Parcourir</i>
<i class="t2" style="left:552px;top:1415px">MIDI</i><i class="t2" style="left:587px;top:1416px">Performances</i>
<div style="left:587px;top:1399px;width:65px;height:5px;background:#33373d"></div>
<div style="left:587px;top:1406px;width:65px;height:5px;background:#33373d"></div>
<div style="left:587px;top:1399px;width:3px;height:5px;background:#33b0d8"></div>
<i class="t1" style="left:706px;top:1399px">44.1 kHz</i><i class="t1" style="left:706px;top:1415px">0.0 ms</i>
<i class="t1" style="left:773px;top:1399px">9:09 jours</i><i class="t2" style="left:774px;top:1415px">Enregistrement max.</i>
<i style="left:896px;top:1400px;color:#d8d9da;font-size:17.5px;font-weight:bold">00002.04.03.27</i>
<i class="t2" style="left:937px;top:1415px">Mesures</i>
<i style="left:1346px;top:1397px;color:#4fa3c8;font-size:12px;font-weight:bold">G</i><i style="left:1346px;top:1413px;color:#4fa3c8;font-size:12px;font-weight:bold">D</i>
<i class="t1" style="left:1364px;top:1397px;font-size:13px">00001.01.01.00</i><i class="t1" style="left:1364px;top:1413px;font-size:13px">00005.01.01.00</i>
<i class="t2" style="left:1528px;top:1415px">Métronome</i>
<i class="t1" style="left:1602px;top:1399px;font-size:13px">4 / 4</i><i class="t2" style="left:1601px;top:1415px">Timing</i>
<i class="t1" style="left:1653px;top:1399px;font-size:13px">Am</i><i class="t2" style="left:1645px;top:1415px">Tonalité</i>
<i class="t1" style="left:1690px;top:1399px;font-size:13px">120.00</i><i class="t2" style="left:1692px;top:1415px">Tempo</i>
<div style="left:1746px;top:1399px;width:90px;height:5px;background:#33373d"></div>
<div style="left:1746px;top:1405px;width:90px;height:5px;background:#2a2d31"></div>
<div style="left:1746px;top:1416px;width:50px;height:11px;background:repeating-linear-gradient(90deg,#55b8e0 0 1px,transparent 1px 2px)"></div>
<div style="left:1796px;top:1416px;width:16px;height:11px;background:repeating-linear-gradient(90deg,#666 0 1px,transparent 1px 2px)"></div>

<!-- graphics overlay -->
<svg width="2560" height="1440" style="left:0;top:0;z-index:2" xmlns="http://www.w3.org/2000/svg">
<defs>
<linearGradient id="cap" x1="0" y1="0" x2="0" y2="1"><stop offset="0" stop-color="#8a8a8a"/><stop offset=".1" stop-color="#e6e6e6"/><stop offset=".3" stop-color="#fff"/><stop offset=".47" stop-color="#bdbdbd"/><stop offset=".53" stop-color="#fff"/><stop offset=".88" stop-color="#fff"/><stop offset="1" stop-color="#808080"/></linearGradient>
<linearGradient id="cap2" x1="0" y1="0" x2="0" y2="1"><stop offset="0" stop-color="#33667f"/><stop offset=".12" stop-color="#66b8de"/><stop offset=".5" stop-color="#3e93ba"/><stop offset=".9" stop-color="#55abd2"/><stop offset="1" stop-color="#2a5a72"/></linearGradient>
<g id="kb"><path d="M.8 0v9M4.8 0v8M8.5 0v8M12.2 0v8M16.2 0v9" stroke="#2a2c30" stroke-width="1.6" fill="none"/><path d="M0 7h17v3H0z" fill="#2a2c30"/></g>
<g id="ks" transform="scale(.62)"><use href="#kb" fill="#444"/></g>
<g id="pw" fill="none" stroke-width="1.6"><path d="M-2.6-3.6a4.6 4.6 0 1 0 5.2 0M0-5.5v4.5"/></g>
<g id="ro"><path d="M1 2l4 5-4 5z" fill="#54585c"/><path d="M9 2h5l1.500 1.500H22V13H9z" fill="#3a3e44"/></g>
<g id="msg"><rect x="0" y="0" width="95" height="23" rx="3" fill="#9ea2a7" stroke="#55595d"/><path d="M24 0v23M47 0v23M71 0v23" stroke="#6a6e72"/><circle cx="59" cy="11.500" r="4.500" fill="#e8e8e8"/><circle cx="83" cy="11.500" r="4.500" fill="#aaa"/><path d="M83 7a4.500 4.500 0 0 1 0 9z" fill="#eee"/></g>
<g id="fd"><rect x="30" y="-18" width="19" height="37" rx="3" fill="url(#cap)" stroke="#55585b" stroke-width="1.500"/><path d="M33 0h13" stroke="#333"/></g>
<g id="dn"><path d="M0 0h8l-4 5z"/></g>
<g id="lr"><path d="M283.500-9v18M287.500-9v18" stroke="#44474b" stroke-width="1.600"/><circle cx="298" cy="0" r="3" fill="#2a2c30"/><use href="#ks" x="308" y="-3"/></g>
<g id="cg">
<rect x="0" y="792" width="81" height="19" fill="#000" opacity=".1"/>
<rect x="0" y="811" width="81" height="20" fill="#cbced4"/>
<path d="M0 831h81M0 901.500h81" stroke="#6c7680"/><rect x="0" y="991" width="81" height="2" fill="#6c7680"/>
<use href="#pw" x="9" y="801" stroke="#1f8ceb"/><path d="M57 799h8l-4 5z" fill="#85888d"/><path d="M74 797v8M70 801h8" stroke="#85888d" stroke-width="2"/>
<use href="#pw" x="9" y="821" stroke="#3f9ad6"/><path d="M66 819h8l-4 5z" fill="#777"/>
<use href="#pw" x="9" y="912" stroke="#fff" opacity=".4"/><path d="M74 908v8M70 912h8" stroke="#85888d" stroke-width="2"/>
<rect x="4" y="1002" width="73" height="18" fill="#000" opacity=".25"/><rect x="4" y="1020" width="73" height="17" fill="#000" opacity=".33"/><rect x="4" y="1037" width="73" height="17" fill="#33373d"/>
<rect x="4" y="1002" width="73" height="52" rx="2" fill="none" stroke="#3b4046"/>
<path d="M40.500 1056v18" stroke="#000" opacity=".3"/>
<rect x="6.500" y="1077.500" width="68" height="41" rx="4" fill="#000" opacity=".3"/><rect x="6.500" y="1077.500" width="68" height="41" rx="4" fill="none" stroke="#3b4046"/><path d="M6.500 1097.500H75M41.500 1077.500V1118" stroke="#3b4046"/>
<circle cx="23" cy="1108" r="5" style="fill:var(--e,#555)"/><path d="M23 1103a5 5 0 0 0 0 10z" style="fill:var(--d,#2f3236)"/><circle cx="58" cy="1108" r="5" style="fill:var(--d,#2f3236)"/>
<rect x="16" y="1127" width="13" height="11" fill="#000" opacity=".22"/>
<rect x="58" y="1126" width="13" height="13" fill="#6a6d70" stroke="#4a4d50"/><rect x="59" y="1127" width="11" height="3.500" fill="#66c0f4"/><path d="M59 1134.500h11" stroke="#444"/>
<rect x="16" y="1139" width="13" height="171" fill="#33373d"/>
<path d="M18 1142.500h9M18 1156.500h9M18 1204.500h9M18 1224.500h9M18 1247.500h9M18 1271.500h9M18 1287.500h9M18 1300.500h9" stroke="#0d72b8"/><path d="M18 1180.500h11" stroke="#c8c8c8"/>
<rect x="33" y="1199" width="14" height="111" fill="#fff" opacity=".3"/>
<path d="M33 1160.500h14M33 1218.500h14M33 1239.500h14M33 1259.500h14M33 1273.500h14M33 1284.500h14" stroke="#000" opacity=".2"/>
<rect x="39" y="1143" width="2" height="150" fill="#33373d"/>
<circle cx="64.500" cy="1296" r="6.500" fill="#3b3f44"/><path d="M59.500 1291l5 5" stroke="#d0d4d8" stroke-width="1.500"/>
<use href="#kb" x="56" y="1317"/>
<rect x="5" y="1333" width="71" height="16" rx="1" fill="#000" opacity=".55"/>
</g>
</defs>

<!-- toolbar icons -->
<path d="M9 8h11v11H9z" fill="#3a3e44" stroke="#777"/><path d="M12 17l2.500-7 2.500 7" stroke="#999" fill="none"/>
<path d="M26 18c-1-4-2-6-1-7l2 3 0-6h1.500l.5 5 .5-6h1.500l.5 6 1-5h1.500v6l1-3h1.500c0 3-1 6-3 8z" fill="#aaa"/>
<path d="M160 25h8l-4 6zM358 25h9l-4.500 6z" fill="#eee"/>
<path d="M410 10h-4v22h4" fill="none" stroke="#fff" stroke-width="1.500"/>
<path d="M428 13v16l4-3 3 6 3-1-3-6 5-1z" fill="#fff" stroke="#222"/>
<rect x="458" y="14" width="14" height="13" fill="none" stroke="#fff" stroke-dasharray="2 1.500" stroke-width="1.500"/><rect x="456" y="12" width="11" height="11" fill="none" stroke="#222"/>
<path d="M487 31l2-7 12-12 4 4-12 12z" fill="#fff" stroke="#222"/>
<path d="M520 27l11-14 8 5-11 14h-6z" fill="#fff" stroke="#222"/>
<path d="M553 31l3-7 12-12 1 2-10 13z" fill="#fff" stroke="#222"/>
<path d="M584 16h4l6-4v20l-6-4h-4z" fill="#fff" stroke="#222"/><path d="M583 11l17 21" stroke="#222" stroke-width="1.500"/>
<path d="M616 16h7V9h3v7l8 5-8 5v7h-3v-7h-7l-3-5z" fill="#fff" stroke="#222"/>
<path d="M647 16h5l7-6v22l-7-6h-5z" fill="#fff" stroke="#222"/><path d="M662 15c2 3 2 9 0 12" fill="none" stroke="#222" stroke-width="1.500"/>
<path d="M733 10v22M736 10v22" stroke="#fff" stroke-width="1.500"/><path d="M737 14l13 7-13 7z" fill="#fff" stroke="#222"/>
<path d="M765 14v16M768 10v22M777 10v22" stroke="#fff" stroke-width="1.500"/><path d="M769 15l15 6-15 6z" fill="#fff" stroke="#222"/>
<circle cx="803" cy="20" r="8" fill="none" stroke="#fff" stroke-width="2"/><path d="M806 24l5 6" stroke="#fff" stroke-width="2"/>
<path d="M832 9h7v8h-7zM826 22c0-4 18-4 18 0l-3 3h-12zM831 26h9l-5 7h-3z" fill="#fff" stroke="#222"/>
<use href="#dn" x="969" y="26" fill="#666"/><use href="#dn" x="1052" y="26" fill="#666"/><use href="#dn" x="1134" y="26" fill="#666"/>
<path d="M1160 8v24" stroke="#fff" stroke-width="1.500"/><path d="M1161 17h15v6h-15z" fill="#fff" stroke="#222"/>
<path d="M1190 13h18v14h-18z" fill="#333" stroke="#222"/><path d="M1192 14v12M1195 14v12" stroke="#aaa" stroke-dasharray="1 1"/><path d="M1204 16l-5 4 5 4z" fill="#fff"/>
<path d="M1221 16h10v-4l8 8-8 8v-4h-10z" fill="#fff" stroke="#222"/><path d="M1239 8v24" stroke="#fff" stroke-width="1.500"/>
<path d="M1257 8v24" stroke="#fff" stroke-width="1.500"/><path d="M1252 20l3-3v6zM1262 20l-3-3v6z" fill="#fff"/>
<path d="M1289 12h21v21h-21z" fill="#ddd" stroke="#444"/><path d="M1296 12v21M1303 12v21M1289 19h21M1289 26h21" stroke="#444"/><circle cx="1306" cy="21" r="5.500" fill="#ddd" stroke="#333"/><path d="M1306 18v6M1303 21h6" stroke="#333"/>
<path d="M1318 20h9l-4.500 6z" fill="#eee"/>
<path d="M1352 12h15v21h-15z" fill="#eee" stroke="#222"/><path d="M1356 15h7v6h-7zM1356 24h7v6h-7z" fill="#888"/>
<path d="M2318 10h15M2318 13h15M2318 16h15M2318 19h15" stroke="#808388"/><path d="M2319 21h13v-1 0h0v1h7l-13 11-14-11z" fill="#cfd1d6" stroke="#666"/>
<path d="M2466 19h9l-4.500 6z" fill="#fff"/>
<!-- inspector icons -->
<path d="M8 56h16M8 60h16M8 64h16M8 67.500h16" stroke="#b8bbbf" stroke-width="2"/><path d="M42 56v12" stroke="#e8e8e8" stroke-width="3"/><circle cx="42" cy="53" r="1.500" fill="#e8e8e8"/>
<g fill="#b9bcc0"><use href="#kb" x="172" y="86" style="filter:invert(1)"/></g>
<use href="#dn" x="180" y="115" fill="#74787c"/><use href="#dn" x="180" y="138" fill="#74787c"/><use href="#dn" x="180" y="161" fill="#74787c"/><use href="#dn" x="180" y="207" fill="#74787c"/><use href="#dn" x="180" y="331" fill="#74787c"/>
<path d="M176 187l3 4 6-11" fill="none" stroke="#111" stroke-width="2"/>
<use href="#pw" x="13" y="334" stroke="#d0d2d5"/>
<path d="M10 352h11v14H10z" fill="#dcdee2" stroke="#33373d"/><path d="M12 356h7M12 359h7M12 362h7" stroke="#33373d"/><path d="M18 361l6-11 1 1-5 11z" fill="#33373d"/>
<use href="#pw" x="11" y="380" stroke="#8a9098"/><path d="M184 375v12M178 381h12" stroke="#fff" stroke-width="2"/>
<path d="M76 636h44" stroke="#e5e5e5" stroke-dasharray="1 5"/><path d="M76 1180h44" stroke="#e5e5e5" stroke-dasharray="1 5"/>
<use href="#dn" x="180" y="666" fill="#74787c"/><use href="#dn" x="180" y="689" fill="#74787c"/><use href="#dn" x="180" y="712" fill="#74787c"/>
<rect x="42" y="746" width="11" height="19" fill="#1f5f93"/><rect x="39" y="746" width="3" height="19" fill="#2f9df4"/>
<path d="M53.500 766v21" stroke="#b0b2b5"/>
<rect x="108.500" y="730.500" width="80" height="50" rx="4" fill="#7d8186" stroke="#45494d"/><path d="M135.500 731v50M161.500 731v50M108.500 755.500h80" stroke="#45494d"/>
<circle cx="175" cy="743" r="7" fill="#eee"/><path d="M170 738l5 5" stroke="#555" stroke-width="2"/><circle cx="122" cy="768" r="5" fill="#e8e8e8"/><circle cx="148" cy="768" r="5" fill="#aaa"/><path d="M148 763a5 5 0 0 0 0 10z" fill="#eee"/>
<use href="#pw" x="62" y="796" stroke="#1f8ceb"/><path d="M168 794h8l-4 5z" fill="#a0a4a9"/><path d="M185 792v8M181 796h8" stroke="#8a8e94" stroke-width="2"/>
<use href="#pw" x="62" y="816" stroke="#3f9ad6"/><path d="M181 814h8l-4 5z" fill="#777"/>
<use href="#pw" x="62" y="1022" stroke="#fff" opacity=".4"/><path d="M185 1018v8M181 1022h8" stroke="#8a8e94" stroke-width="2"/>
<path d="M20 802.500h9M20 835.500h9M20 938.500h9M20 981.500h9M20 1032.500h9M20 1084.500h9M20 1118.500h9M20 1146.500h9" stroke="#0d72b8"/><path d="M20 887.500h9" stroke="#c8c8c8"/>
<path d="M36 853.500h12M36 935.500h12M36 975.500h12M36 1024.500h12M36 1072.500h12M36 1104.500h12M36 1130.500h12" stroke="#c4c6c9"/>
<rect x="41" y="803" width="2" height="343" fill="#33373d"/>
<g transform="translate(3,906)"><use href="#fd"/></g>
<!-- arrange tools -->
<path d="M205 58l5-1 3 3-1 2 6 9-2 2-7-8-3 1-3-4z" fill="#b0b3b7"/>
<path d="M285 69l6-12 3 12 6-16" fill="none" stroke="#aeb2b6" stroke-width="1.500"/><path d="M318 70V55h15l-2 8h-13" fill="none" stroke="#aeb2b6" stroke-width="1.500"/>
<path d="M347 55h4v4h-4zM353 55h4v4h-4zM347 61h9v4h-9zM347 66h4v4h-4zM353 61h8v4h-8zM355 66h4v4h-4z" fill="#c8cacd"/>
<path d="M376 52h3v14a4 4 0 1 1-3-3zM381 53h6v3h-6zM381 58h4v3h-4zM381 63h6v3h-6z" fill="#eee"/>
<circle cx="408" cy="61" r="7.500" fill="none" stroke="#b8bbbf" stroke-width="2"/><path d="M408 55v6l-4 4" stroke="#b8bbbf" fill="none" stroke-width="1.500"/>
<path d="M436 54v14M429 61h14" stroke="#d0d2d5" stroke-width="2.500"/>
<path d="M1240 52l12 0v9z" fill="#17a0ff"/><path d="M453 52l-1 7 6-7z" fill="#17a0ff"/>
<!-- track headers -->
<use href="#msg" x="232.500" y="111.500"/><use href="#msg" x="232.500" y="171.500"/><use href="#msg" x="232.500" y="372.500"/>
<use href="#kb" x="416" y="118"/><use href="#kb" x="416" y="178"/><use href="#kb" x="416" y="379"/>
<use href="#ks" x="236" y="154"/><use href="#ks" x="236" y="214"/><use href="#ks" x="236" y="415"/>
<path d="M236 234h5M242 231v6M244 231v6" stroke="#444" stroke-width="1.500"/><path d="M237 247v8M240 249v6M243 247v8" stroke="#444" stroke-width="1.500"/>
<use href="#dn" x="350" y="155" fill="#6e7276"/><use href="#dn" x="350" y="215" fill="#6e7276"/><use href="#dn" x="350" y="232" fill="#6e7276"/><use href="#dn" x="350" y="249" fill="#6e7276"/><use href="#dn" x="350" y="416" fill="#2a2c30"/>
<!-- clips -->
<path d="M453 109H564L558 122H453ZM853 109H964L958 122H853Z" fill="#0a4a6b"/>
<path d="M453 155H495L502 168H453ZM853 155H895L902 168H853Z" fill="#0a4a6b"/>
<path d="M453 169H501L494 182H453Z" fill="#0c6384"/>
<path d="M453 370H496L490 383H453Z" fill="#0f6b70"/><path d="M453 416H474L481 429H453Z" fill="#0f6b70"/>
<path d="M459 159.500h7M459 162h7M459 164.500h7M859 159.500h7M859 162h7M859 164.500h7" stroke="#b4c8d2"/>
<path d="M482 165v-6a2.500 2.500 0 0 1 5 0v6zM882 165v-6a2.500 2.500 0 0 1 5 0v6z" fill="#9ab4c2"/>
<path d="M458 427v-6h2v6zM461 420h8v2h-8zM461 424h6v2h-6z" fill="#bfe0e0"/>
<path d="M852.500 109v59" stroke="#0b78ad"/><path d="M453 168.500H1252M453 369.500H1252" stroke="#1e4a5e"/>
<g stroke="#3f4347" fill="none">
<path stroke-width="4" d="M452 125h4M502 125h4M552 125h4M602 125h4M652 125h4M702 125h4M752 125h4M802 125h4M852 125h4M902 125h4M952 125h4M1002 125h4M1052 125h4M1102 125h4M1152 125h4M1202 125h4M477 142h4M490 142h4M502 142h4M527 142h4M565 142h4M577 142h4M615 142h4M627 142h4M677 142h4M690 142h4M702 142h4M727 142h4M765 142h4M777 142h4M815 142h4M827 142h4M877 142h4M890 142h4M902 142h4M927 142h4M965 142h4M977 142h4M1015 142h4M1027 142h4M1077 142h4M1090 142h4M1102 142h4M1127 142h4M1165 142h4M1177 142h4M1215 142h4M1227 142h4"/>
<path stroke-width="7" d="M502 133.500h4M602 133.500h4M702 133.500h4M802 133.500h4M902 133.500h4M1002 133.500h4M1102 133.500h4M1202 133.500h4"/>
<path stroke-width="2.200" d="M452 269H615M452 275H615M452 280H615M628 277H840M629 283H840M629 288H840M852 272H1015M852 277H1015M853 283H1015M1027 269H1240M1027 275H1240M1027 280H1240"/>
<path stroke="#3c4a50" d="M452 392.500H465M490 392.500H513M515 394.500H543M552 392.500H652M652 394.500H707M727 394.500H861M877 395.500H930M927 393.500H996M1002 391.500H1055M1052 392.500H1221"/>
</g>
<path d="M830.500 78V765" stroke="#cfd3d6"/>
<path d="M2208 116l-5 9h10z" fill="#85898d"/>
<!-- arrange bottom bar -->
<use href="#pw" x="318" y="775" stroke="#2a8fe8"/><use href="#dn" x="416" y="773" fill="#72767a"/>
<path d="M437 769h8M437 772h8M437 775h8" stroke="#44484c" stroke-width="1.500"/><path d="M467 770v10l-6-5z" fill="#44484c"/>
<path d="M2078 770v10l5-5z" fill="#44484c"/><path d="M2098 775h74M2118 771v8" stroke="#55595d"/><path d="M2186 769l-6 10h12z" fill="#44484c"/><path d="M2205 771h8M2205 774h8M2205 777h8" stroke="#44484c" stroke-width="1.500"/>
<!-- mixer sidebar -->
<path d="M205 794l11 11M216 794l-11 11" stroke="#2a2c30" stroke-width="3"/><path d="M238 805l8-8M240 796h7v7" fill="none" stroke="#2a2c30" stroke-width="2.500"/>
<path d="M241 820h9l-4.500 6z" fill="#2a2c30"/>
<path d="M220 841l5 0 2 3-1 1 6 6-2 2-6-6-3 1-2-4z" fill="#33373d"/>
<path d="M220 1196h10l-5 7zM225 1206l5 7h-10z" fill="#33373d"/><path d="M216 1230v10l7-5zM234 1230v10l-7-5z" fill="#33373d"/>
<path d="M217 1353h16M217 1356h16M217 1359h16M217 1362h16" stroke="#fff" stroke-width="1.800"/>
<use href="#lr" x="0" y="821"/><use href="#lr" x="0" y="841"/><use href="#lr" x="0" y="861"/><use href="#lr" x="0" y="881"/><use href="#lr" x="0" y="901"/><use href="#lr" x="0" y="921"/><use href="#lr" x="0" y="941"/><use href="#lr" x="0" y="961"/><use href="#lr" x="0" y="981"/><use href="#lr" x="0" y="1001"/>
<rect x="323" y="812" width="6" height="18" fill="#0f97d4"/><rect x="323" y="972" width="6" height="18" fill="#1ac2e8"/><rect x="323" y="992" width="6" height="18" fill="#22ffff"/>
<path d="M536 794h10l-8 9h9v3h-13l8-9h-6z" fill="#2ea82e"/><path d="M562 795v10M557 800h10" stroke="#2a2c30" stroke-width="2"/>
<use href="#pw" x="462" y="821" stroke="#2aa3ec"/><use href="#pw" x="462" y="843" stroke="#2aa3ec"/><use href="#pw" x="462" y="865" stroke="#2aa3ec"/>
<use href="#dn" x="558" y="820" fill="#74787c"/><use href="#dn" x="558" y="842" fill="#74787c"/><use href="#dn" x="558" y="864" fill="#74787c"/>
<g transform="translate(292,1354)"><use href="#kb" style="filter:invert(1)" transform="scale(.6)"/></g>
<path d="M262 1363l4-8 3 4 3-4 4 8M347 1358h13M347 1362h8M354 1354v12M375 1354v12M372 1360h6" stroke="#a2a6aa" fill="none"/>
<path d="M400 1380h9v6h-9zM402 1380v-3a2.500 2.500 0 0 1 5 0" fill="#333" stroke="#333"/>
<path d="M423 1375v8M419 1379h8" stroke="#222" stroke-width="2"/><path d="M438 1379h8" stroke="#222" stroke-width="2"/><path d="M380 1375h8l-4 5z" fill="#a0a3a7"/>
<path d="M587 1375v9l-5-4.500z" fill="#54585c"/><path d="M2121 1375v9l5-4.500z" fill="#54585c"/>
<!-- channels -->
<use href="#cg" x="573" style="--d:#d5e5ea;--e:#8aa"/><use href="#cg" x="656"/><use href="#cg" x="739"/><use href="#cg" x="822"/><use href="#cg" x="905"/><use href="#cg" x="988"/><use href="#cg" x="1071"/><use href="#cg" x="1154"/><use href="#cg" x="1237" style="--d:#d5e5ea;--e:#8aa"/><use href="#cg" x="1320" style="--d:#e5f5f5;--e:#8bb"/>
<path d="M573 788h81v4h-81zM573 993h81v3h-81z" fill="#0f97d4"/><path d="M1237 788h81v4h-81zM1237 993h81v3h-81z" fill="#1ac2e8"/><path d="M1320 788h81v4h-81zM1320 993h81v3h-81z" fill="#22ffff"/>
<rect x="1320" y="902" width="81" height="18" fill="#888" opacity=".6"/>
<rect x="1320" y="792" width="81" height="19" fill="#888" opacity=".45"/>
<!-- pan -->
<rect x="612" y="1037" width="3" height="17" fill="#2f9df4"/><rect x="695" y="1037" width="3" height="17" fill="#2f9df4"/>
<rect x="779" y="1037" width="16" height="17" fill="#1f5f93"/><rect x="795" y="1037" width="3" height="17" fill="#2f9df4"/>
<rect x="861" y="1037" width="3" height="17" fill="#2f9df4"/>
<rect x="925" y="1037" width="20" height="17" fill="#1f5f93"/><rect x="922" y="1037" width="3" height="17" fill="#2f9df4"/>
<rect x="1027" y="1037" width="3" height="17" fill="#2f9df4"/><rect x="1110" y="1037" width="3" height="17" fill="#2f9df4"/><rect x="1193" y="1037" width="3" height="17" fill="#2f9df4"/><rect x="1276" y="1037" width="3" height="17" fill="#2f9df4"/>
<rect x="1353" y="1037" width="7" height="17" fill="#1f5f93"/><rect x="1350" y="1037" width="3" height="17" fill="#2f9df4"/>
<!-- fader caps -->
<use href="#fd" x="573" y="1180"/><use href="#fd" x="656" y="1180"/><use href="#fd" x="739" y="1192"/><use href="#fd" x="822" y="1180"/><use href="#fd" x="905" y="1191"/><use href="#fd" x="988" y="1180"/><use href="#fd" x="1071" y="1180"/><use href="#fd" x="1154" y="1180"/><use href="#fd" x="1237" y="1180"/><use href="#fd" x="1320" y="1188"/>
<!-- main channel gfx -->
<use href="#pw" x="2150" y="821" stroke="#fff" opacity=".4"/><use href="#pw" x="2150" y="912" stroke="#fff" opacity=".4"/><path d="M2212 817v8M2208 821h8M2212 908v8M2208 912h8" stroke="#85888d" stroke-width="2"/><use href="#dn" x="2204" y="798" fill="#8fa6b4"/>
<rect x="2142.500" y="1077.500" width="68" height="41" rx="4" fill="#6d7176" stroke="#3b4046"/><rect x="2143" y="1098" width="33" height="20" fill="#4f8fb0"/><path d="M2142.500 1097.500H2210M2176.500 1077.500v20M2180 1098v20M2161 1098v20" stroke="#3b4046"/><path d="M2150 1112l6-7 5 7z" fill="#fff"/><path d="M2172 1102v12M2169 1106h6v4h-6z" fill="#ddd" stroke="#ccc"/><circle cx="2194" cy="1108" r="4.500" fill="#ddd"/><circle cx="2201" cy="1108" r="4.500" fill="#999" stroke="#ddd"/>
<rect x="2145" y="1127" width="13" height="12" fill="#6f7378" stroke="#55595d"/>
<rect x="2169" y="1199" width="14" height="111" fill="#fff" opacity=".25"/>
<rect x="2175" y="1143" width="2" height="150" fill="#33373d"/>
<rect x="2166.500" y="1162" width="19" height="37" rx="3" fill="url(#cap2)" stroke="#2a3a44" stroke-width="1.500"/><path d="M2169 1180.500h14" stroke="#a35a4a"/>
<rect x="2187" y="1139" width="13" height="171" fill="#33373d"/>
<path d="M2189 1143.500h9M2189 1148.500h9M2189 1162.500h9M2189 1171.500h9M2189 1179.500h9M2189 1187.500h9M2189 1217.500h9M2189 1246.500h9M2189 1278.500h9M2189 1305.500h9" stroke="#0d72b8"/><path d="M2189 1155.500h9" stroke="#d0d0d0"/>
<circle cx="2152" cy="1296" r="6.500" fill="#3b3f44"/><path d="M2147 1291l5 5" stroke="#d0d4d8" stroke-width="1.500"/>
<path d="M2169 1318h11l-8 7h9M2168 1325h13" fill="none" stroke="#222" stroke-width="2"/>
<rect x="2141" y="1333" width="71" height="16" fill="#4f5256"/>
<!-- browser -->
<path d="M2235 52l6 8h-2v8h-8v-8h-2z" fill="#b8bbbf"/>
<path d="M2521 55v4" stroke="#888"/><path d="M2525 54h8l-4 5z" fill="#888"/><circle cx="2545" cy="57" r="5" fill="none" stroke="#b8bbbf" stroke-width="2"/><path d="M2549 61l4 5" stroke="#b8bbbf" stroke-width="2"/>
<path d="M2522 80l3 0 1 2 4 7-2 2-4-6-2 0z" fill="#aab"/><rect x="2541.500" y="81.500" width="10" height="10" fill="#5e6771" stroke="#fff" stroke-width="2"/><rect x="2541" y="81" width="11" height="3" fill="#fff"/>
<use href="#ro" x="2251" y="101"/><path d="M2263 106h9v3h-9z" fill="#2aa3e6"/>
<use href="#ro" x="2251" y="123"/><path d="M2265 135v-5M2268 135v-8M2271 135v-6" stroke="#9aa" stroke-width="1.500"/>
<path d="M2252 147l4 5-4 5z" fill="#54585c"/><path d="M2267 145l2.500 5 5 .7-3.700 3.600 1 5.200-4.800-2.500-4.800 2.500 1-5.200-3.700-3.600 5-.7z" fill="none" stroke="#44484c"/>
<path d="M2252 169l4 5-4 5z" fill="#54585c"/><circle cx="2267" cy="174" r="7" fill="none" stroke="#44484c"/><path d="M2267 169v5l3 3" fill="none" stroke="#44484c"/>
<use href="#ro" x="2251" y="189"/><use href="#ro" x="2251" y="211"/><use href="#ro" x="2251" y="233"/><use href="#ro" x="2251" y="255"/><use href="#ro" x="2251" y="277"/><use href="#ro" x="2251" y="299"/>
<path d="M2250 332l5-5v5z" fill="#54585c"/><path d="M2260 323h5l1.500 1.500H2273v2h-10l-3 8zM2261 335l3-7h11l-3 7z" fill="#3a3e44"/>
<rect x="2272" y="343" width="16" height="14" fill="#55595e"/><path d="M2274 354l1-2M2279 354l1-2M2284 354l1-2" stroke="#ccc"/><rect x="2272" y="357" width="16" height="5" fill="#9a9da1"/>
<use href="#ro" x="2251" y="365"/><use href="#ro" x="2251" y="387"/><use href="#ro" x="2251" y="409"/><use href="#ro" x="2251" y="431"/><use href="#ro" x="2251" y="453"/><use href="#ro" x="2251" y="475"/><use href="#ro" x="2251" y="497"/>
<path d="M2252 521l4 5-4 5z" fill="#e6eef8"/><path d="M2260 521h5l1.500 1.500H2273V532h-13z" fill="#b8d8f0"/>
<use href="#ro" x="2251" y="541"/><use href="#ro" x="2251" y="563"/><use href="#ro" x="2251" y="585"/><path d="M2263 590v6M2266 590v6M2269 590v6" stroke="#ddd"/><use href="#ro" x="2251" y="607"/><use href="#ro" x="2251" y="629"/><use href="#ro" x="2251" y="651"/><use href="#ro" x="2251" y="673"/><use href="#ro" x="2251" y="695"/><use href="#ro" x="2251" y="717"/><use href="#ro" x="2251" y="739"/><use href="#ro" x="2251" y="761"/><use href="#ro" x="2251" y="783"/>
<path d="M2233 1305h8l2 2h15v15h-25z" fill="#e8eaec"/>
<!-- transport -->
<circle cx="563" cy="1405" r="6" fill="none" stroke="#777"/><path d="M550 1402v6l3-3zM576 1402v6l-3-3z" fill="#666"/><circle cx="563" cy="1402" r="1" fill="#999"/><circle cx="560" cy="1405" r="1" fill="#999"/><circle cx="566" cy="1405" r="1" fill="#999"/><circle cx="563" cy="1408" r="1" fill="#999"/>
<path d="M1052 1411l9-7v14zM1086 1404v14l-8-7zM1078 1404v14l-8-7z" fill="#c8cace"/>
<path d="M1105 1404l8 7-8 7zM1114 1404l8 7-8 7zM1131 1404l9 7-9 7z" fill="#c8cace"/>
<path d="M1157 1404v14" stroke="#c8cace" stroke-width="2"/><path d="M1168 1404v14l-9-7z" fill="#c8cace"/>
<rect x="1189" y="1401" width="21" height="20" fill="#33b0d8"/>
<path d="M1227 1400l18 11-18 11z" fill="#c8cace"/>
<circle cx="1270" cy="1411" r="10" fill="#c8cace"/>
<path d="M1298 1420c-5-6-3-15 5-15h15c8 0 10 9 5 15M1306 1420l5-8M1314 1420l-5-8" fill="none" stroke="#33b0d8" stroke-width="2.500"/>
<path d="M1474 1405c5 0 5 3 10 3h6" fill="none" stroke="#999"/>
<path d="M1501 1402v7" stroke="#999"/><path d="M1505 1403h8v5h-8z" fill="#999"/>
<circle cx="1535" cy="1405" r="4.500" fill="#33a0d8"/>
<path d="M1552 1400l4 0 1 3-1 1 4 6-2 1-4-6-2 0z" fill="#aaa"/><path d="M1577 1410l4-9 4 9z" fill="#777"/>
<path d="M1478 1415l4 0 1 3-1 1 4 5-2 1-4-5-2 0z" fill="#aaa"/>
<path d="M1500 1420h20" stroke="#aaa"/><rect x="1506" y="1417" width="9" height="6" fill="#aaa"/>
<circle cx="1825" cy="1421" r="4.500" fill="#fff"/><circle cx="1822" cy="1421" r="4.500" fill="#33a0d8"/>
</svg>
</body></html>
